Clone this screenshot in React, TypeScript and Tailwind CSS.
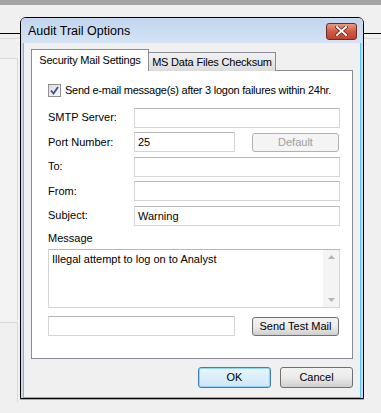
const font = "font-['Liberation_Sans',Arial,sans-serif]";

function Field({ value = "", className = "" }: { value?: string; className?: string }) {
  return (
    <div
      className={`h-[20px] border border-[#d5d5d5] border-t-[#b8b8b8] bg-white px-[3px] text-[11px] leading-[18px] text-black ${className}`}
    >
      {value}
    </div>
  );
}

function WinButton({
  label,
  disabled = false,
  focused = false,
  className = "",
}: {
  label: string;
  disabled?: boolean;
  focused?: boolean;
  className?: string;
}) {
  return (
    <div
      className={`flex items-center justify-center whitespace-nowrap rounded-[3px] border text-[11px] ${
        focused
          ? "border-[#3c7fb1] bg-gradient-to-b from-[#e9f5fd] to-[#cde6f7] shadow-[inset_0_0_0_1px_#93d4f5]"
          : disabled
            ? "border-[#adb2b5] bg-[#f4f4f4] text-[#a0a0a0]"
            : "border-[#707070] bg-gradient-to-b from-[#f2f2f2] via-[#ebebeb] to-[#cfcfcf]"
      } ${className}`}
    >
      {label}
    </div>
  );
}

function Row({ label, children }: { label: string; children: React.ReactNode }) {
  return (
    <div className="flex items-center">
      <div className="w-[86px] text-[11px]">{label}</div>
      {children}
    </div>
  );
}

export default function App() {
  return (
    <div className={`relative h-[413px] w-[381px] overflow-hidden bg-[#f0f0f0] ${font}`}>
      {/* app behind the dialog */}
      <div className="h-[5px] bg-[#a3a3a3]" />
      <div className="mt-[28px] h-px bg-black" />
      <div className="mt-[4px] h-px bg-[#d8d8d8]" />
      <div className="mt-[19px] h-[262px] w-[18px] border-t border-r border-[#d8d8d8] bg-[#f3f3f3]" />
      <div className="mt-[2px] h-[80px] w-[18px] border-t border-r border-[#d8d8d8]" />

      {/* dialog */}
      <div className="absolute left-[20px] top-[17px] w-[344px] rounded-t-[6px] border border-black shadow-[0_1px_0_#58c8ec]">
        <div className="rounded-t-[5px] border-x border-t border-[#c9dcf2] bg-[#c4d8ef]">
          <div className="flex h-[24px] items-center justify-between bg-gradient-to-b from-[#c2d6ee] to-[#d4e3f4] pl-[6px] pr-[5px] text-[12.5px] text-black">
            <span className="mt-[1px]">Audit Trail Options</span>
            <div className="flex h-[17px] w-[31px] items-center justify-center rounded-[3px] border border-[#6f2a22] bg-gradient-to-b from-[#e79a87] via-[#cf5a41] to-[#c0422d]">
              <svg width="13" height="10" viewBox="0 0 13 10">
                <path d="M2 1 L11 9 M11 1 L2 9" stroke="#5a1e16" strokeWidth="3.4" strokeLinecap="square" />
                <path d="M2 1 L11 9 M11 1 L2 9" stroke="#ffffff" strokeWidth="2" strokeLinecap="square" />
              </svg>
            </div>
          </div>
          <div className="mx-[1px] border-x border-b border-[#53c4ec] bg-[#f0f0f0] px-[7px] pb-[9px] pt-[6px]">
            {/* tabs */}
            <div className="flex h-[22px] items-end">
              <div className="relative z-10 flex h-[22px] w-[118px] items-center justify-center whitespace-nowrap border border-b-0 border-[#898c95] bg-white text-[11px] tracking-[-0.2px]">
                Security Mail Settings
              </div>
              <div className="flex h-[19px] w-[127px] items-center justify-center whitespace-nowrap border border-l-0 border-b-0 border-[#898c95] bg-gradient-to-b from-[#f2f2f2] to-[#dcdcdc] text-[11px] tracking-[-0.2px]">
                MS Data Files Checksum
              </div>
            </div>
            <div className="-mt-px flex h-[289px] flex-col border border-[#898c95] bg-white pl-[16px] pr-[12px] pt-[11px] text-black">
              <div className="flex items-center gap-[4px] text-[11px]">
                <div className="flex h-[13px] w-[13px] items-center justify-center border border-[#8f8f8f] bg-gradient-to-br from-[#dcdcdc] to-[#fafafa]">
                  <svg width="9" height="9" viewBox="0 0 9 9">
                    <path d="M1 4.5 L3.5 7.5 L8 1" fill="none" stroke="#3a4fa8" strokeWidth="1.8" />
                  </svg>
                </div>
                <span className="whitespace-nowrap tracking-[-0.25px]">
                  Send e-mail message(s) after 3 logon failures within 24hr.
                </span>
              </div>
              <div className="mt-[9px] flex flex-col gap-[4.5px]">
                <Row label="SMTP Server:">
                  <Field className="w-[206px]" />
                </Row>
                <Row label="Port Number:">
                  <Field value="25" className="w-[101px]" />
                  <WinButton label="Default" disabled className="ml-[17px] h-[19px] w-[87px]" />
                </Row>
                <Row label="To:">
                  <Field className="w-[206px]" />
                </Row>
                <Row label="From:">
                  <Field className="w-[206px]" />
                </Row>
                <Row label="Subject:">
                  <Field value="Warning" className="w-[206px]" />
                </Row>
              </div>
              <div className="mt-[4px] text-[11px]">Message</div>
              <div className="mt-[3px] flex h-[59px] w-[292px] border border-[#d5d5d5] border-t-[#b8b8b8] bg-white">
                <div className="flex-1 px-[3px] text-[11px] leading-[18px]">Illegal attempt to log on to Analyst</div>
                <div className="flex w-[16px] flex-col items-center justify-between bg-[#f4f4f4] py-[5px]">
                  <svg width="7" height="4" viewBox="0 0 7 4">
                    <path d="M0 4 L3.5 0 L7 4 Z" fill="#b4b4b4" />
                  </svg>
                  <svg width="7" height="4" viewBox="0 0 7 4">
                    <path d="M0 0 L3.5 4 L7 0 Z" fill="#b4b4b4" />
                  </svg>
                </div>
              </div>
              <div className="mt-[8px] flex items-center">
                <Field className="w-[187px]" />
                <WinButton label="Send Test Mail" className="ml-[17px] h-[19px] w-[87px]" />
              </div>
            </div>
            <div className="mt-[8px] flex justify-end gap-[9px]">
              <WinButton label="OK" focused className="h-[21px] w-[73px]" />
              <WinButton label="Cancel" className="h-[21px] w-[73px]" />
            </div>
          </div>
        </div>
      </div>
    </div>
  );
}
